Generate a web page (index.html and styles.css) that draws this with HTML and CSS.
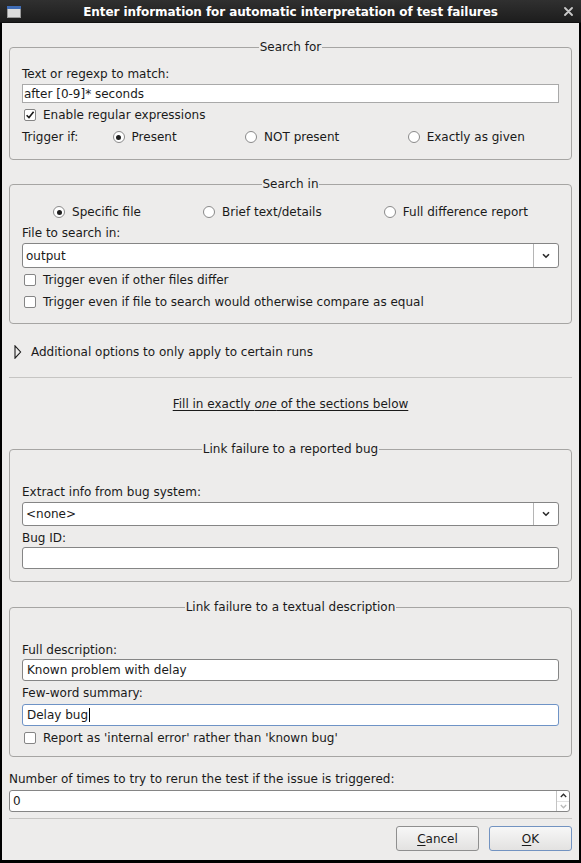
FILE: index.html
```html
<!DOCTYPE html>
<html>
<head>
<meta charset="utf-8">
<title>Enter information</title>
<link rel="stylesheet" href="styles.css">
</head>
<body>
<div class="window">
  <div class="titlebar">
    <div class="tb-side">
      <svg class="appicon" width="14" height="12" viewBox="0 0 14 12">
        <rect x="0.5" y="0.5" width="13" height="11" fill="#dcdcdc" stroke="#9a9a9a"/>
        <rect x="0.5" y="0.5" width="13" height="2" fill="#3f6cb5" stroke="#3f6cb5"/>
      </svg>
    </div>
    <div class="title">Enter information for automatic interpretation of test failures</div>
    <div class="tb-side tb-right">
      <svg class="close" width="9" height="9" viewBox="0 0 9 9">
        <path d="M1 1 L8 8 M8 1 L1 8" stroke="#c9c9c9" stroke-width="1.8" stroke-linecap="round"/>
      </svg>
    </div>
  </div>

  <div class="content">
    <fieldset class="frame f-search">
      <legend>Search for</legend>
      <div class="lbl l-regexp">Text or regexp to match:</div>
      <div class="entry flat">after [0-9]* seconds</div>
      <div class="check row-a"><span class="box"><svg width="12" height="12" viewBox="0 0 12 12"><path d="M2.6 6.2 L5 8.6 L9.6 2.8" fill="none" stroke="#1a1a1a" stroke-width="1.6"/></svg></span>Enable regular expressions</div>
      <div class="trigger">
        <span class="tlabel">Trigger if:</span>
        <div class="radios">
          <span class="radio"><span class="circle on"></span>Present</span>
          <span class="radio"><span class="circle"></span>NOT present</span>
          <span class="radio"><span class="circle"></span>Exactly as given</span>
        </div>
      </div>
    </fieldset>

    <fieldset class="frame f-in">
      <legend>Search in</legend>
      <div class="radios spread">
        <span class="radio"><span class="circle on"></span>Specific file</span>
        <span class="radio"><span class="circle"></span>Brief text/details</span>
        <span class="radio"><span class="circle"></span>Full difference report</span>
      </div>
      <div class="lbl l-file">File to search in:</div>
      <div class="combo c-file">
        <span class="ctext">output</span>
        <span class="cbtn"><svg width="8" height="6" viewBox="0 0 8 6"><path d="M1 1.2 L4 4.2 L7 1.2" fill="none" stroke="#2a2a2a" stroke-width="1.6"/></svg></span>
      </div>
      <div class="check row-b"><span class="box"></span>Trigger even if other files differ</div>
      <div class="check row-c"><span class="box"></span>Trigger even if file to search would otherwise compare as equal</div>
    </fieldset>

    <div class="expander">
      <svg width="8" height="14" viewBox="0 0 8 14"><path d="M1 0.8 L6.6 7 L1 13.2 Z" fill="none" stroke="#1a1a1a" stroke-width="1.1" stroke-linejoin="miter"/></svg>
      <span>Additional options to only apply to certain runs</span>
    </div>

    <div class="sep sep-1"></div>

    <div class="hint"><span class="u">Fill in exactly <i>one</i> of the sections below</span></div>

    <fieldset class="frame f-bug">
      <legend>Link failure to a reported bug</legend>
      <div class="lbl l-extract">Extract info from bug system:</div>
      <div class="combo c-bug">
        <span class="ctext">&lt;none&gt;</span>
        <span class="cbtn"><svg width="8" height="6" viewBox="0 0 8 6"><path d="M1 1.2 L4 4.2 L7 1.2" fill="none" stroke="#2a2a2a" stroke-width="1.6"/></svg></span>
      </div>
      <div class="lbl l-tight">Bug ID:</div>
      <div class="entry e-bugid"></div>
    </fieldset>

    <fieldset class="frame f-text">
      <legend>Link failure to a textual description</legend>
      <div class="lbl l-full">Full description:</div>
      <div class="entry e-full">Known problem with delay</div>
      <div class="lbl l-few">Few-word summary:</div>
      <div class="entry e-few focus">Delay bug<span class="caret"></span></div>
      <div class="check row-d"><span class="box"></span>Report as 'internal error' rather than 'known bug'</div>
    </fieldset>

    <div class="lbl l-rerun">Number of times to try to rerun the test if the issue is triggered:</div>
    <div class="spin">
      <span class="stext">0</span>
      <span class="sbtns">
        <span class="sb up"><svg width="7" height="5" viewBox="0 0 7 5"><path d="M0.8 4 L3.5 1.2 L6.2 4" fill="none" stroke="#2a2a2a" stroke-width="1.3"/></svg></span>
        <span class="sb down"><svg width="7" height="5" viewBox="0 0 7 5"><path d="M0.8 1 L3.5 3.8 L6.2 1" fill="none" stroke="#b9b9b9" stroke-width="1.3"/></svg></span>
      </span>
    </div>

    <div class="sep sep-2"></div>

    <div class="buttons">
      <button class="btn"><span class="u">C</span>ancel</button>
      <button class="btn default"><span class="u">O</span>K</button>
    </div>
  </div>
</div>
</body>
</html>
```

FILE: styles.css
```css
* { box-sizing: border-box; }

html, body {
  margin: 0;
  padding: 0;
}

body {
  width: 581px;
  height: 863px;
  overflow: hidden;
  background: #000;
  font-family: "DejaVu Sans", "Noto Sans", sans-serif;
  font-size: 12px;
  color: #1a1a1a;
}

.window {
  width: 581px;
  height: 863px;
  display: flex;
  flex-direction: column;
}

/* ---------- title bar ---------- */
.titlebar {
  flex: none;
  height: 23px;
  display: flex;
  align-items: center;
  background: linear-gradient(#303030, #1d1d1d);
  border-bottom: 1px solid #101010;
}

.tb-side {
  width: 30px;
  flex: none;
  display: flex;
  align-items: center;
}

.appicon {
  margin-left: 7px;
  margin-top: 1px;
  display: block;
}

.tb-right {
  justify-content: flex-end;
}

.close {
  display: block;
  margin-right: 8px;
  margin-top: 1px;
}

.title {
  flex: 1;
  text-align: center;
  color: #ffffff;
  font-weight: bold;
  font-size: 12px;
  letter-spacing: -0.08px;
  line-height: 14px;
  padding-top: 1px;
  white-space: nowrap;
}

/* ---------- content ---------- */
.content {
  flex: 1;
  margin: 0 2px 3px 2px;
  background: #edeceb;
  padding: 17px 7px 0 7px;
  display: flex;
  flex-direction: column;
}

.frame {
  margin: 0;
  padding: 0 12px 0 12px;
  border: 1px solid #a6a5a3;
  border-radius: 4px;
  min-width: 0;
  display: flex;
  flex-direction: column;
}

.frame legend {
  margin: 0 auto;
  padding: 0 1px;
  line-height: 14px;
  font-size: 12px;
}

.lbl {
  line-height: 15px;
  height: 16px;
  padding-top: 1px;
  white-space: nowrap;
}

.entry {
  background: #fff;
  border: 1px solid #858585;
  border-radius: 3px;
  height: 22px;
  line-height: 20px;
  padding: 0 4px;
  white-space: nowrap;
  display: flex;
  align-items: center;
}

.entry.flat {
  border-radius: 0;
  border-color: #a9a9a9;
  padding: 0 1px;
  height: 19px;
}

.entry.focus {
  border-color: #6e93c6;
}

.caret {
  display: inline-block;
  width: 1px;
  height: 14px;
  background: #000;
  margin-left: 1px;
}

/* checkboxes */
.check {
  display: flex;
  align-items: center;
  height: 18px;
  padding-left: 2px;
  gap: 7px;
  white-space: nowrap;
}

.box {
  width: 12px;
  height: 12px;
  flex: none;
  background: #fff;
  border: 1px solid #858585;
  border-radius: 2px;
  display: flex;
  align-items: center;
  justify-content: center;
  overflow: hidden;
}

.box svg { display: block; flex: none; }

/* radios */
.radio {
  display: inline-flex;
  align-items: center;
  gap: 7px;
  white-space: nowrap;
}

.circle {
  width: 12px;
  height: 12px;
  flex: none;
  border-radius: 50%;
  background: #fff;
  border: 1px solid #8a8a8a;
  display: flex;
  align-items: center;
  justify-content: center;
}

.circle.on::after {
  content: "";
  width: 5px;
  height: 5px;
  border-radius: 50%;
  background: #1e1e1e;
}

.radios {
  display: flex;
  justify-content: space-around;
  align-items: center;
}

/* frame 1 */
.f-search { padding-top: 12px; padding-bottom: 13px; }
.f-search .entry { margin-top: 2px; }
.f-search .row-a { margin-top: 3px; }

.trigger {
  margin-top: 4px;
  height: 18px;
  display: flex;
  align-items: center;
}

.trigger .radios { flex: 1; }

/* frame 2 */
.f-in { margin-top: 17px; padding-top: 12px; padding-bottom: 12px; }
.f-in .spread { height: 18px; }
.l-file { margin-top: 4px; }

.combo {
  background: #fff;
  border: 1px solid #858585;
  border-radius: 3px;
  display: flex;
  align-items: stretch;
}

.combo .ctext {
  flex: 1;
  padding-left: 3px;
  display: flex;
  align-items: center;
}

.combo .cbtn {
  width: 25px;
  flex: none;
  border-left: 1px solid #b5b5b5;
  display: flex;
  align-items: center;
  justify-content: center;
}

.combo .cbtn svg { display: block; }

.c-file { margin-top: 2px; height: 25px; }
.row-b { margin-top: 3px; }
.row-c { margin-top: 4px; }

/* expander */
.expander {
  margin-top: 18px;
  height: 20px;
  display: flex;
  align-items: center;
  padding-left: 5px;
  gap: 9px;
  white-space: nowrap;
}

.expander svg { display: block; flex: none; }

.sep {
  height: 1px;
  background: #c6c5c3;
  flex: none;
}

.sep-1 { margin-top: 15px; }

.hint {
  margin-top: 19px;
  line-height: 15px;
  text-align: center;
}

.u { text-decoration: underline; text-underline-offset: 2px; }

/* frame 3 */
.f-bug { margin-top: 30px; padding-top: 28px; padding-bottom: 12px; }
.c-bug { margin-top: 2px; height: 24px; }
.l-tight { margin-top: 4px; }
.e-bugid { margin-top: 1px; }

/* frame 4 */
.f-text { margin-top: 18px; padding-top: 28px; padding-bottom: 9px; }
.e-full { margin-top: 1px; }
.l-few { margin-top: 4px; }
.e-few { margin-top: 3px; }
.row-d { margin-top: 3px; }

/* rerun */
.l-rerun { margin-top: 14px; }

.spin {
  margin-top: 3px;
  margin-right: 2px;
  height: 22px;
  background: #fff;
  border: 1px solid #858585;
  border-radius: 3px;
  display: flex;
  align-items: stretch;
}

.spin .stext {
  flex: 1;
  padding-left: 3px;
  display: flex;
  align-items: center;
}

.sbtns {
  width: 13px;
  flex: none;
  border-left: 1px solid #c4c4c4;
  display: flex;
  flex-direction: column;
}

.sb {
  flex: 1;
  display: flex;
  align-items: center;
  justify-content: center;
}

.sb svg { display: block; }

.sb.up { border-bottom: 1px solid #e2e2e2; }

.sep-2 { margin-top: 6px; }

.buttons {
  margin-top: 7px;
  display: flex;
  justify-content: flex-end;
  gap: 10px;
  margin-right: 0;
}

.btn {
  width: 83px;
  height: 25px;
  font-family: "DejaVu Sans", "Noto Sans", sans-serif;
  font-size: 12px;
  color: #1a1a1a;
  background: linear-gradient(#f7f7f7, #e3e2e1);
  border: 1px solid #8f8f8f;
  border-radius: 3px;
  padding: 0;
}

.btn.default {
  border-color: #7293c1;
}
```
